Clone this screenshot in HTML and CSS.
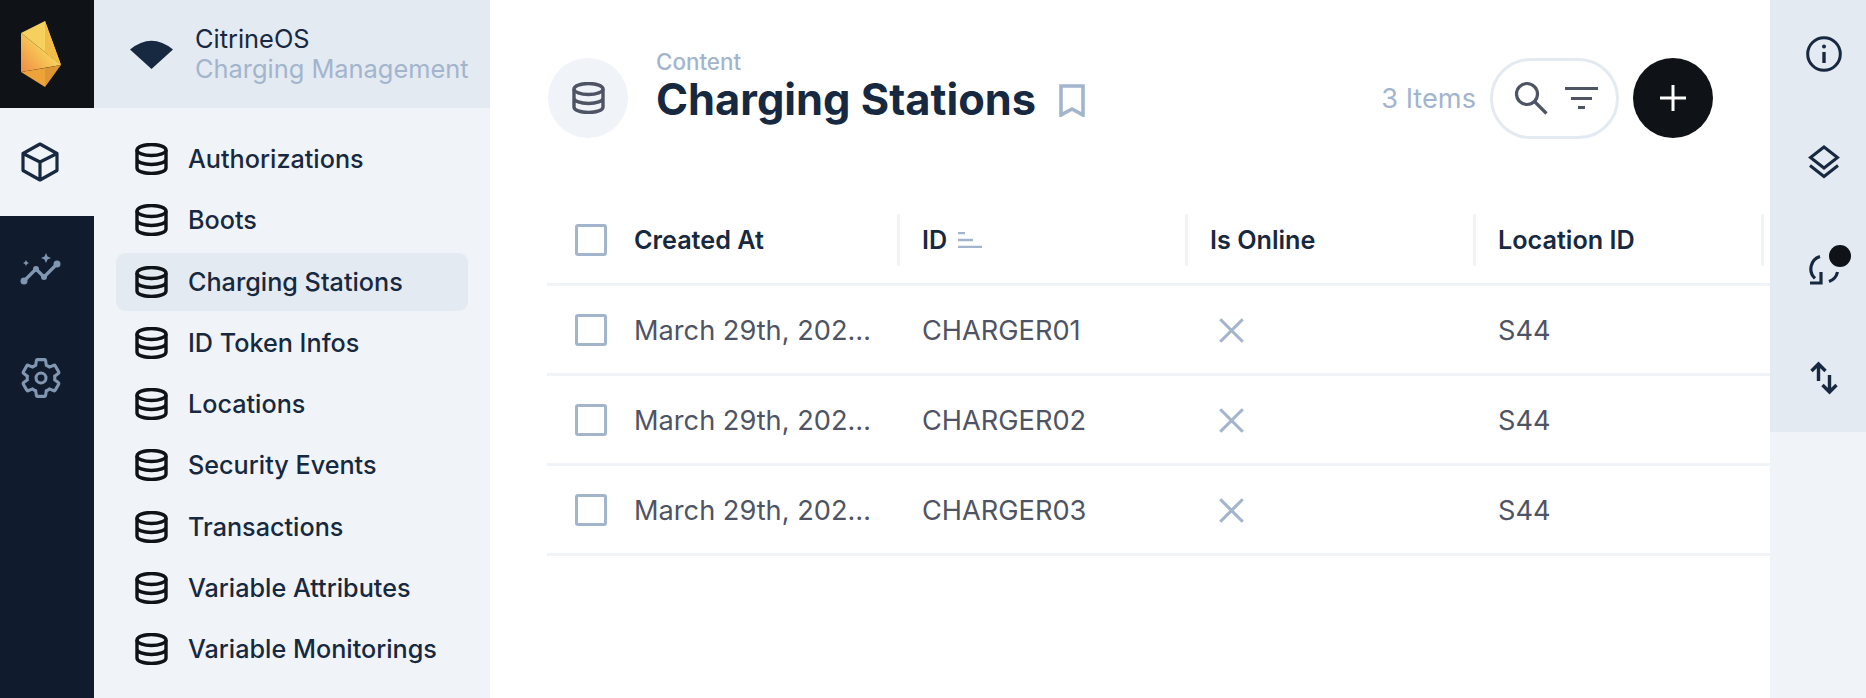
FILE: index.html
```html
<!DOCTYPE html>
<html lang="en">
<head>
    <meta charset="UTF-8">
    <meta name="viewport" content="width=device-width, initial-scale=1.0">
    <title>Charging Stations</title>
    <link rel="stylesheet" href="styles.css">
</head>
<body>

<svg class="defs" width="0" height="0">
    <symbol id="database" viewBox="0 0 33 32">
        <ellipse cx="16.5" cy="7" rx="14.5" ry="5.5" fill="none" stroke="currentColor" stroke-width="3.400"/>
        <path d="M2 7v18c0 3.2 6.5 5.5 14.5 5.500S31 28.200 31 25V7M2 16c0 3.200 6.500 5.500 14.500 5.500S31 19.200 31 16" fill="none" stroke="currentColor" stroke-width="3.400"/>
    </symbol>
    <symbol id="cross" viewBox="0 0 24 24">
        <path d="M2 2l20 20M22 2L2 22" fill="none" stroke="currentColor" stroke-width="2.800"/>
    </symbol>
    <linearGradient id="facet" x1="21" y1="72" x2="50" y2="48" gradientUnits="userSpaceOnUse">
        <stop offset="0" stop-color="#ef8d45"/>
        <stop offset="1" stop-color="#f9d85c"/>
    </linearGradient>
</svg>

<div class="app">
    <!-- Module bar -->
    <nav class="modules">
        <div class="logo">
            <svg width="94" height="108" viewBox="0 0 94 108">
                <polygon points="45,21 21,33 61,65" fill="#f6d05e"/>
                <polygon points="45,21 61,65 45,52" fill="#f1bd48"/>
                <polygon points="21,33 61,65 21,72" fill="url(#facet)"/>
                <polygon points="21,72 45,68 45,87" fill="#eda23a"/>
                <polygon points="45,68 61,65 45,87" fill="#dc9633"/>
            </svg>
        </div>
        <a class="module active">
            <svg width="38" height="40" viewBox="0 0 38 40"><path d="M19 2l17 9.500v17L19 38 2 28.500v-17zM2 11.500L19 20l17-8.500M19 20v18" fill="none" stroke="currentColor" stroke-width="3.200" stroke-linejoin="round"/></svg>
        </a>
        <a class="module">
            <svg width="42" height="34" viewBox="0 0 42 34"><path d="M4 28l12-12 8 8 14-14" fill="none" stroke="currentColor" stroke-width="3.200" stroke-linejoin="round"/><circle cx="4" cy="28" r="3.500" fill="currentColor"/><circle cx="16" cy="16" r="3" fill="currentColor"/><circle cx="24" cy="24" r="3" fill="currentColor"/><circle cx="37" cy="11" r="3.500" fill="currentColor"/><path d="M26 0l1.500 3.500L31 5l-3.500 1.500L26 10l-1.500-3.500L21 5l3.500-1.500zM6 7l1 2 2 1-2 1-1 2-1-2-2-1 2-1z" fill="currentColor"/></svg>
        </a>
        <a class="module">
            <svg width="46" height="46" viewBox="0 0 24 24"><path d="M19.140 12.940c.04-.3.06-.61.06-.94 0-.32-.02-.64-.07-.94l2.030-1.580c.18-.14.23-.41.12-.61l-1.920-3.320c-.12-.22-.37-.29-.59-.22l-2.390.96c-.5-.38-1.030-.7-1.620-.94l-.36-2.540c-.04-.24-.24-.41-.48-.41h-3.840c-.24 0-.43.17-.47.41l-.36 2.540c-.59.24-1.130.57-1.620.94l-2.390-.96c-.22-.08-.47 0-.59.22L2.740 8.870c-.12.21-.08.47.12.61l2.030 1.580c-.05.3-.09.63-.09.94s.02.64.07.94l-2.030 1.580c-.18.14-.23.41-.12.61l1.920 3.320c.12.22.37.29.59.22l2.390-.96c.5.38 1.030.7 1.620.94l.36 2.540c.05.24.24.41.48.41h3.840c.24 0 .44-.17.47-.41l.36-2.540c.59-.24 1.130-.56 1.620-.94l2.390.96c.22.08.47 0 .59-.22l1.920-3.320c.12-.22.07-.47-.12-.61l-2.010-1.580z" fill="none" stroke="currentColor" stroke-width="1.600"/><circle cx="12" cy="12" r="2.600" fill="none" stroke="currentColor" stroke-width="1.600"/></svg>
        </a>
    </nav>

    <!-- Collections -->
    <aside class="sidebar">
        <header class="project">
            <svg width="43" height="30" viewBox="0 0 43 30"><path d="M0 10.500Q21.500-7 43 10.500L21.500 30z" fill="#172940"/></svg>
            <div class="project-text">
                <div class="project-name">CitrineOS</div>
                <div class="project-sub">Charging Management</div>
            </div>
        </header>
        <ul class="collections">
            <li class="collection"><svg class="db-icon"><use href="#database"/></svg>Authorizations</li>
            <li class="collection"><svg class="db-icon"><use href="#database"/></svg>Boots</li>
            <li class="collection active"><svg class="db-icon"><use href="#database"/></svg>Charging Stations</li>
            <li class="collection"><svg class="db-icon"><use href="#database"/></svg>ID Token Infos</li>
            <li class="collection"><svg class="db-icon"><use href="#database"/></svg>Locations</li>
            <li class="collection"><svg class="db-icon"><use href="#database"/></svg>Security Events</li>
            <li class="collection"><svg class="db-icon"><use href="#database"/></svg>Transactions</li>
            <li class="collection"><svg class="db-icon"><use href="#database"/></svg>Variable Attributes</li>
            <li class="collection"><svg class="db-icon"><use href="#database"/></svg>Variable Monitorings</li>
        </ul>
    </aside>

    <!-- Main content -->
    <main class="main">
        <header class="topbar">
            <div class="title-icon"><svg class="db-icon"><use href="#database"/></svg></div>
            <div class="title-text">
                <div class="breadcrumb">Content</div>
                <h1 class="title">Charging Stations</h1>
            </div>
            <svg class="bookmark" width="26" height="33" viewBox="0 0 26 33"><path d="M2 2h22v29l-11-6-11 6z" fill="none" stroke="currentColor" stroke-width="3.600"/></svg>
            <div class="topbar-right">
                <span class="item-count">3 Items</span>
                <div class="search-pill">
                    <svg width="34" height="34" viewBox="0 0 34 34"><circle cx="13" cy="13" r="10.500" fill="none" stroke="currentColor" stroke-width="3.200"/><path d="M20.500 20.500L32.500 32.500" fill="none" stroke="currentColor" stroke-width="3.200"/></svg>
                    <svg width="33" height="22" viewBox="0 0 33 22"><path d="M0 1.500h33M6 11.500h21M13 20.500h7" fill="none" stroke="currentColor" stroke-width="3"/></svg>
                </div>
                <button class="add-btn">
                    <svg width="26" height="26" viewBox="0 0 26 26"><path d="M13 0v26M0 13h26" fill="none" stroke="#fff" stroke-width="3"/></svg>
                </button>
            </div>
        </header>

        <div class="table">
            <div class="row head">
                <div class="cell first"><span class="check"></span><span>Created At</span></div>
                <div class="cell"><span>ID</span>
                    <svg class="sort" width="24" height="16" viewBox="0 0 24 16"><path d="M0 1h7M0 8h15M0 15h24" fill="none" stroke="currentColor" stroke-width="2.400"/></svg>
                </div>
                <div class="cell">Is Online</div>
                <div class="cell">Location ID</div>
                <div class="cell"></div>
            </div>
            <div class="row">
                <div class="cell first"><span class="check"></span><span>March 29th, 202…</span></div>
                <div class="cell">CHARGER01</div>
                <div class="cell"><svg class="cross"><use href="#cross"/></svg></div>
                <div class="cell">S44</div>
                <div class="cell"></div>
            </div>
            <div class="row">
                <div class="cell first"><span class="check"></span><span>March 29th, 202…</span></div>
                <div class="cell">CHARGER02</div>
                <div class="cell"><svg class="cross"><use href="#cross"/></svg></div>
                <div class="cell">S44</div>
                <div class="cell"></div>
            </div>
            <div class="row">
                <div class="cell first"><span class="check"></span><span>March 29th, 202…</span></div>
                <div class="cell">CHARGER03</div>
                <div class="cell"><svg class="cross"><use href="#cross"/></svg></div>
                <div class="cell">S44</div>
                <div class="cell"></div>
            </div>
        </div>
    </main>

    <!-- Sidebar actions -->
    <div class="actions-col">
        <div class="actions">
            <a class="action">
                <svg width="36" height="36" viewBox="0 0 36 36"><circle cx="18" cy="18" r="16.300" fill="none" stroke="currentColor" stroke-width="3"/><path d="M18 16v11" fill="none" stroke="currentColor" stroke-width="3.400"/><circle cx="18" cy="10.500" r="2" fill="currentColor"/></svg>
            </a>
            <a class="action">
                <svg width="32" height="34" viewBox="0 0 32 34"><path d="M16 2l13.500 10.500L16 23 2.500 12.500z" fill="none" stroke="currentColor" stroke-width="3"/><path d="M2 20.500L16 31.500l14-11" fill="none" stroke="currentColor" stroke-width="3"/></svg>
            </a>
            <a class="action">
                <svg width="30" height="30" viewBox="0 0 30 30"><path d="M11 1.500A13 13 0 0 0 6 23.400M28.500 17A13 13 0 0 1 20 26.500" fill="none" stroke="currentColor" stroke-width="3.200"/><path d="M1 28H12V17" fill="none" stroke="currentColor" stroke-width="3.200"/></svg>
                <span class="dot"></span>
            </a>
            <a class="action">
                <svg width="28" height="34" viewBox="0 0 28 34"><path d="M8.500 20V3M1.500 10L8.500 3l7 7M19.500 14v17M12.500 24l7 7 7-7" fill="none" stroke="currentColor" stroke-width="3.400"/></svg>
            </a>
        </div>
    </div>
</div>

</body>
</html>
```

FILE: styles.css
```css
* {
    box-sizing: border-box;
}

body {
    margin: 0;
    background-color: #ffffff;
    color: #172940;
    font-family: Inter, sans-serif;
    font-size: 25px;
}

.defs {
    position: absolute;
}

.app {
    display: flex;
    height: 100vh;
    overflow: hidden;
}

/* Module bar */
.modules {
    width: 94px;
    flex-shrink: 0;
    background-color: #101c2d;
}

.logo {
    height: 108px;
    background-color: #0f1216;
}

.logo svg {
    display: block;
}

.module {
    display: flex;
    justify-content: center;
    align-items: center;
    height: 108px;
    padding-right: 12px;
    color: #8196b1;
}

.module.active {
    padding-right: 14px;
    background-color: #f0f4f9;
    color: #172940;
}

/* Collections */
.sidebar {
    width: 396px;
    flex-shrink: 0;
    background-color: #f0f4f9;
}

.project {
    display: flex;
    align-items: center;
    gap: 22px;
    height: 108px;
    padding-left: 36px;
    background-color: #e4eaf1;
}

.project-text {
    font-size: 25.4px;
}

.project-name {
    line-height: 30px;
}

.project-sub {
    line-height: 30px;
    color: #a2b5cd;
    white-space: nowrap;
}

.collections {
    list-style: none;
    margin: 0;
    padding: 22px 22px 0;
}

.collection {
    display: flex;
    align-items: center;
    gap: 20px;
    height: 58px;
    margin-bottom: 3.25px;
    padding-left: 19px;
    border-radius: 9px;
    font-size: 25.2px;
    font-weight: 450;
}

.collection.active {
    background-color: #e4eaf1;
}

.db-icon {
    width: 33px;
    height: 32px;
    color: #0f1216;
}

/* Main */
.main {
    flex: 1;
    min-width: 0;
    overflow: hidden;
    padding-top: 58px;
    padding-left: 57px;
    background-color: #ffffff;
}

.topbar {
    display: flex;
    align-items: center;
    height: 80px;
    padding-right: 57px;
}

.title-icon {
    display: flex;
    justify-content: center;
    align-items: center;
    width: 80px;
    height: 80px;
    margin-left: 1px;
    border-radius: 50%;
    background-color: #f0f4f9;
}

.title-icon .db-icon {
    color: #4f5464;
}

.title-text {
    margin-left: 28px;
    margin-top: -22px;
}

.breadcrumb {
    font-size: 22.4px;
    font-weight: 500;
    line-height: 24px;
    color: #a2b5cd;
}

.title {
    margin: 0;
    font-size: 43.4px;
    font-weight: 700;
    line-height: 50px;
    white-space: nowrap;
}

.bookmark {
    margin-left: 23px;
    margin-top: 4px;
    color: #a2b5cd;
}

.topbar-right {
    display: flex;
    align-items: center;
    margin-left: auto;
}

.item-count {
    color: #a2b5cd;
    font-size: 27.2px;
    margin-right: 14px;
}

.search-pill {
    display: flex;
    justify-content: center;
    align-items: center;
    gap: 17px;
    width: 129px;
    height: 81px;
    padding-left: 2px;
    border: 3px solid #e4eaf1;
    border-radius: 41px;
    color: #4f5464;
}

.add-btn {
    display: flex;
    justify-content: center;
    align-items: center;
    width: 80px;
    height: 80px;
    margin-left: 14px;
    padding: 0;
    border: 0;
    border-radius: 50%;
    background-color: #0f1216;
}

/* Table */
.table {
    margin-top: 59px;
}

.row {
    display: flex;
    align-items: center;
    width: 1600px;
    height: 90px;
    padding-top: 1px;
    border-bottom: 3px solid #f0f4f9;
    color: #4f5464;
    font-size: 27.2px;
}

.row.head {
    height: 89px;
    padding-top: 0;
    color: #172940;
    font-size: 25.2px;
    font-weight: 600;
}

.cell {
    display: flex;
    align-items: center;
    flex-shrink: 0;
    width: 288px;
    height: 52px;
    padding-left: 25px;
    white-space: nowrap;
}

.head .cell {
    padding-left: 22px;
    border-left: 3px solid #f0f4f9;
}

.head .cell.first,
.cell.first {
    width: 350px;
    padding-left: 28px;
    border-left: 0;
}

.check {
    flex-shrink: 0;
    width: 32px;
    height: 32px;
    margin-right: 27px;
    border: 3.5px solid #a2b5cd;
    border-radius: 3px;
}

.sort {
    margin-left: 11px;
    color: #a2b5cd;
}

.cross {
    width: 27px;
    height: 27px;
    margin-left: 8px;
    color: #a2b5cd;
}

/* Right actions */
.actions-col {
    width: 96px;
    flex-shrink: 0;
    background-color: #f0f4f9;
}

.actions {
    background-color: #e4eaf1;
}

.action {
    position: relative;
    display: flex;
    justify-content: center;
    align-items: center;
    height: 108px;
    padding-left: 12px;
    color: #172940;
}

.dot {
    position: absolute;
    left: 59px;
    top: 29px;
    width: 22px;
    height: 22px;
    border-radius: 50%;
    background-color: #0f1216;
}
```
